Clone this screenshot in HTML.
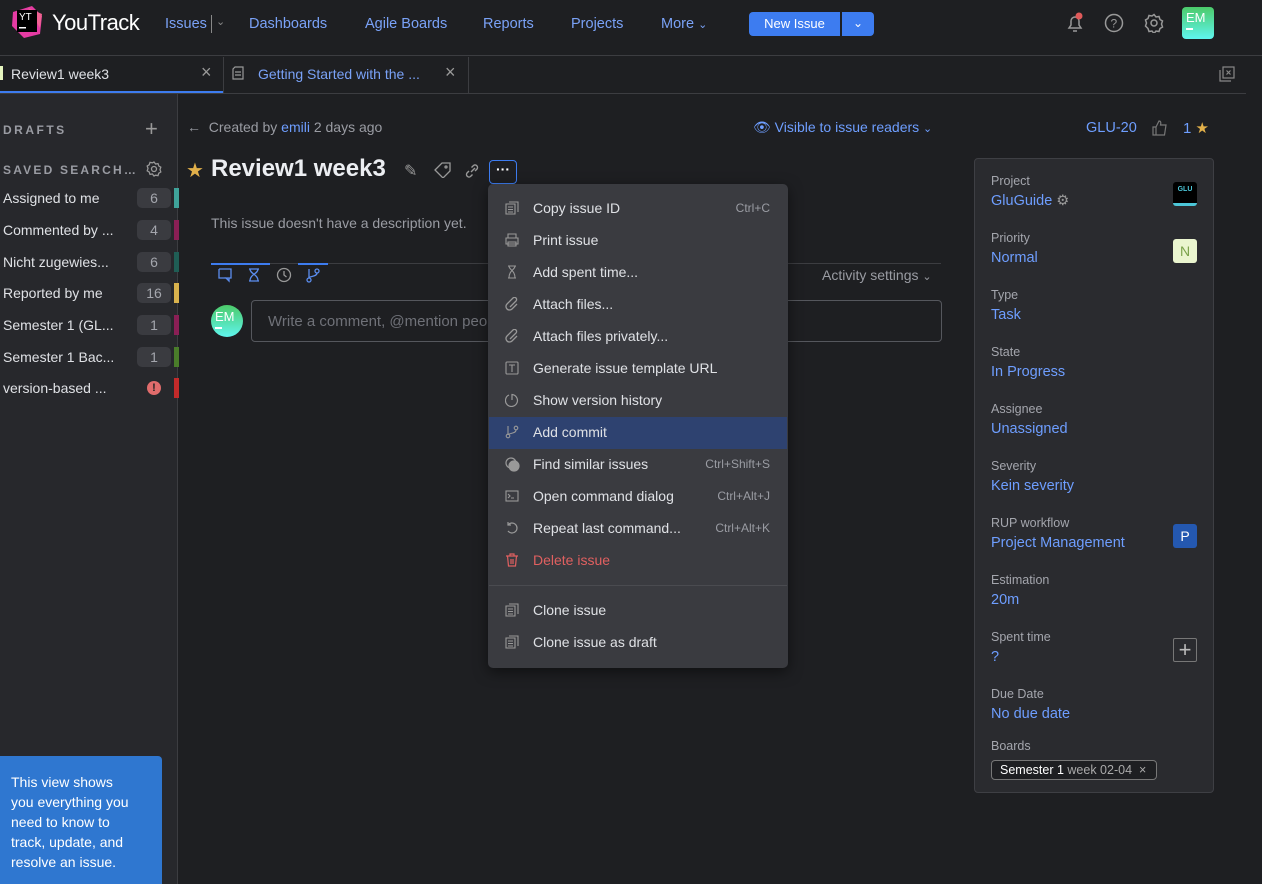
<!DOCTYPE html><html><head><meta charset="utf-8"><style>
*{margin:0;padding:0;box-sizing:border-box}
body{width:1262px;height:884px;background:#1e1f22;font-family:"Liberation Sans",sans-serif;color:#dfe1e5;position:relative;overflow:hidden;font-size:14px}
.a{position:absolute;white-space:nowrap}
.lnk{color:#6e9eff}
.mut{color:#9a9ca3}
.nav{top:16px;font-size:14.5px;color:#7aa2f7}
.si{left:3px;font-size:14px;color:#dfe1e5}
.cnt{left:137px;width:34px;height:20px;background:#3a3b40;border-radius:5px;color:#a4a6ad;text-align:center;line-height:20px;font-size:14px}
.bar{left:174px;width:5px;height:20px}
.mi{left:489px;width:298px;height:32px;line-height:32px;font-size:14px}
.mi .t{position:absolute;left:44px}
.mi .k{position:absolute;right:17px;font-size:12px;color:#9a9ca3}
.mi svg{position:absolute;left:16px;top:9px}
.fl{left:991px;font-size:12.5px;color:#a4a6ad}
.fv{left:991px;font-size:14.5px;color:#6e9eff}
</style></head><body>
<div class="a" style="left:0;top:0;width:1262px;height:56px;background:#1e1f22;border-bottom:1px solid #3c3d41"></div>
<svg class="a" style="left:10px;top:6px" width="34" height="32"><polygon points="3,6 22,0 32,10 30,28 14,32 2,20" fill="#e53ba3"/><polygon points="18,2 32,8 30,22" fill="#f06292"/><rect x="7" y="4" width="20" height="22" fill="#000"/><text x="9" y="14" fill="#fff" font-size="10" font-family="Liberation Sans">YT</text><rect x="9" y="21" width="7" height="1.5" fill="#fff"/></svg>
<div class="a" style="left:52px;top:10px;font-size:22px;color:#fff;letter-spacing:-0.5px">YouTrack</div>
<div class="a nav" style="left:165px">Issues</div>
<div class="a" style="left:211px;top:15px;width:1px;height:18px;background:#888"></div>
<div class="a nav" style="left:216px;top:15px;color:#888;font-size:11px">⌄</div>
<div class="a nav" style="left:249px">Dashboards</div>
<div class="a nav" style="left:365px">Agile Boards</div>
<div class="a nav" style="left:483px">Reports</div>
<div class="a nav" style="left:571px">Projects</div>
<div class="a nav" style="left:661px">More <span style="font-size:11px">⌄</span></div>
<div class="a" style="left:749px;top:12px;width:91px;height:24px;background:#3d7cf0;border-radius:4px 0 0 4px;color:#fff;font-size:13px;line-height:24px;text-align:center">New Issue</div>
<div class="a" style="left:842px;top:12px;width:32px;height:24px;background:#3d7cf0;border-radius:0 4px 4px 0;color:#fff;font-size:12px;line-height:22px;text-align:center">⌄</div>
<svg class="a" style="left:1064px;top:12px" width="22" height="22" fill="none" stroke="#999" stroke-width="1.5"><path d="M5 16h12l-2-3V9a4 4 0 0 0-8 0v4z M9 19h4"/><circle cx="15" cy="4" r="3.5" fill="#e05a5a" stroke="none"/></svg>
<svg class="a" style="left:1104px;top:13px" width="20" height="20" fill="none" stroke="#999" stroke-width="1.5"><circle cx="10" cy="10" r="8.5"/><text x="6.5" y="14.5" fill="#999" stroke="none" font-size="12" font-family="Liberation Sans">?</text></svg>
<svg class="a" style="left:1144px;top:13px" width="20" height="20" fill="none" stroke="#999" stroke-width="1.5"><circle cx="10" cy="10" r="3"/><path d="M10 1.5l2 2.5 3-.5 1 3 2.5 1.5-1 3 1 3-2.5 1.5-1 3-3-.5-2 2.5-2-2.5-3 .5-1-3L1.5 13l1-3-1-3L4 5.5l1-3 3 .5z"/></svg>
<div class="a" style="left:1182px;top:7px;width:32px;height:32px;border-radius:4px;background:linear-gradient(#4cca6a,#5ff5ee);color:#fff;font-size:13px;padding:3px 0 0 4px">EM<div style="width:7px;height:1.5px;background:#fff;margin-top:3px"></div></div>
<div class="a" style="left:0;top:93px;width:1246px;height:1px;background:#3c3d41"></div>
<div class="a" style="left:0;top:66px;width:3px;height:14px;background:#e6f5c0"></div>
<div class="a" style="left:11px;top:66px;font-size:14px;color:#dfe1e5">Review1 week3</div>
<div class="a" style="left:201px;top:62px;font-size:18px;color:#999">×</div>
<div class="a" style="left:0;top:91px;width:223px;height:2px;background:#3d7cf0"></div>
<div class="a" style="left:223px;top:57px;width:1px;height:36px;background:#3c3d41"></div>
<svg class="a" style="left:232px;top:66px" width="12" height="14" fill="none" stroke="#999" stroke-width="1.2"><path d="M3 1h8v12H1V3z M3 6h6M3 9h6"/></svg>
<div class="a" style="left:258px;top:66px;font-size:14px;color:#7aa2f7">Getting Started with the ...</div>
<div class="a" style="left:445px;top:62px;font-size:18px;color:#999">×</div>
<div class="a" style="left:468px;top:57px;width:1px;height:36px;background:#3c3d41"></div>
<svg class="a" style="left:1219px;top:66px" width="16" height="16" fill="none" stroke="#888" stroke-width="1.2"><rect x="4" y="1" width="11" height="11"/><path d="M1 4v11h11"/><path d="M7.5 4.5l4 4M11.5 4.5l-4 4"/></svg>
<div class="a" style="left:0;top:94px;width:178px;height:790px;background:#27282c;border-right:1px solid #3c3d41"></div>
<div class="a" style="left:3px;top:123px;font-size:12px;font-weight:bold;letter-spacing:2.5px;color:#9a9ca3">DRAFTS</div>
<div class="a" style="left:145px;top:116px;font-size:22px;color:#999;font-weight:200">+</div>
<div class="a" style="left:3px;top:163px;font-size:12px;font-weight:bold;letter-spacing:2.2px;color:#9a9ca3">SAVED SEARCH…</div>
<svg class="a" style="left:146px;top:161px" width="16" height="16" fill="none" stroke="#999" stroke-width="1.3"><circle cx="8" cy="8" r="2.5"/><path d="M8 1l1.6 2 2.4-.4.8 2.4 2 1.2-.8 2.4.8 2.4-2 1.2-.8 2.4-2.4-.4L8 15l-1.6-2-2.4.4-.8-2.4-2-1.2.8-2.4-.8-2.4 2-1.2.8-2.4 2.4.4z"/></svg>
<div class="a si" style="top:190px">Assigned to me</div><div class="a cnt" style="top:188px">6</div><div class="a bar" style="top:188px;background:#3fa39a"></div>
<div class="a si" style="top:222px">Commented by ...</div><div class="a cnt" style="top:220px">4</div><div class="a bar" style="top:220px;background:#8a1f55"></div>
<div class="a si" style="top:254px">Nicht zugewies...</div><div class="a cnt" style="top:252px">6</div><div class="a bar" style="top:252px;background:#1f5e55"></div>
<div class="a si" style="top:285px">Reported by me</div><div class="a cnt" style="top:283px">16</div><div class="a bar" style="top:283px;background:#d8b24d"></div>
<div class="a si" style="top:317px">Semester 1 (GL...</div><div class="a cnt" style="top:315px">1</div><div class="a bar" style="top:315px;background:#8a1f55"></div>
<div class="a si" style="top:349px">Semester 1 Bac...</div><div class="a cnt" style="top:347px">1</div><div class="a bar" style="top:347px;background:#4a7d2a"></div>
<div class="a si" style="top:380px">version-based ...</div>
<div class="a" style="left:147px;top:381px;width:14px;height:14px;border-radius:50%;background:#e06c6c;color:#222;font-size:11px;font-weight:bold;text-align:center;line-height:14px">!</div><div class="a bar" style="top:378px;background:#c22a2a"></div>
<div class="a" style="left:0;top:756px;width:162px;height:128px;background:#2f77d0;border-radius:0 4px 0 0;color:#fff;font-size:14px;line-height:20px;padding:16px 24px 0 11px;white-space:normal">This view shows you everything you need to know to track, update, and resolve an issue.</div>
<div class="a mut" style="left:187px;top:119px;font-size:14px">←&nbsp; Created by <span class="lnk">emili</span> 2 days ago</div>
<div class="a lnk" style="left:753px;top:119px;font-size:14px">👁 Visible to issue readers <span style="font-size:11px">⌄</span></div>
<div class="a lnk" style="left:1086px;top:120px;font-size:14.5px">GLU-20</div>
<svg class="a" style="left:1152px;top:120px" width="16" height="16" fill="none" stroke="#777" stroke-width="1.2"><path d="M1 7h3v8H1z M4 7l3-6c2 0 2 2 1.5 4H14l-1.5 10H4"/></svg>
<div class="a lnk" style="left:1183px;top:119px;font-size:15px">1 <span style="color:#e2b04a">★</span></div>
<div class="a" style="left:186px;top:158px;font-size:20px;color:#e2b04a">★</div>
<div class="a" style="left:211px;top:155px;font-size:24px;font-weight:bold;color:#eceef2">Review1 week3</div>
<div class="a" style="left:404px;top:161px;font-size:16px;color:#999">✎</div>
<svg class="a" style="left:434px;top:162px" width="18" height="16" fill="none" stroke="#999" stroke-width="1.3"><path d="M1 8l7-7h8v8l-7 7z"/><circle cx="12" cy="5" r="1"/></svg>
<svg class="a" style="left:464px;top:163px" width="16" height="16" fill="none" stroke="#999" stroke-width="1.4"><path d="M7 9l4-4 M5 8L3 10a2.5 2.5 0 0 0 3.5 3.5L8.5 11.5 M11 8l2-2a2.5 2.5 0 0 0-3.5-3.5L7.5 4.5"/></svg>
<div class="a" style="left:489px;top:160px;width:28px;height:24px;border:1.5px solid #3d7cf0;border-radius:4px;color:#fff;text-align:center;line-height:16px;font-size:14px;font-weight:bold">···</div>
<div class="a mut" style="left:211px;top:215px;font-size:14px">This issue doesn't have a description yet.</div>
<div class="a" style="left:211px;top:263px;width:730px;height:1px;background:#3c3d41"></div>
<div class="a" style="left:211px;top:263px;width:59px;height:2px;background:#3d7cf0"></div>
<div class="a" style="left:298px;top:263px;width:30px;height:2px;background:#3d7cf0"></div>
<svg class="a" style="left:217px;top:267px" width="110" height="16" fill="none" stroke-width="1.3"><path d="M2 2h12v9H9l3 3v-3" stroke="#5b8def"/><path d="M2 2v9h7" stroke="#5b8def"/><path d="M32 2h10M32 14h10M33 2c0 5 8 5 8 12M41 2c0 5-8 5-8 12" stroke="#5b8def"/><circle cx="67" cy="8" r="6.5" stroke="#999"/><path d="M67 4v4l2.5 2" stroke="#999"/><circle cx="92" cy="13" r="2" stroke="#5b8def"/><circle cx="100" cy="4" r="2" stroke="#5b8def"/><path d="M92 2v9M100 6c0 4-8 3-8 5" stroke="#5b8def"/></svg>
<div class="a mut" style="left:822px;top:267px;font-size:14px">Activity settings <span style="font-size:11px">⌄</span></div>
<div class="a" style="left:211px;top:305px;width:32px;height:32px;border-radius:50%;background:linear-gradient(#4cca6a,#5ff5ee);color:#fff;font-size:13px;padding:4px 0 0 4px">EM<div style="width:7px;height:1.5px;background:#fff;margin-top:3px"></div></div>
<div class="a" style="left:251px;top:300px;width:691px;height:42px;border:1px solid #55575d;border-radius:4px;color:#6f7178;font-size:15px;padding:12px 0 0 16px">Write a comment, @mention people</div>
<div class="a" style="left:974px;top:158px;width:240px;height:635px;background:#2a2b2f;border:1px solid #3e3f44;border-radius:4px"></div>
<div class="a fl" style="top:174px">Project</div><div class="a fv" style="top:193px">GluGuide <span style="color:#999">⚙</span></div>
<div class="a" style="left:1173px;top:182px;width:24px;height:24px;background:#000;border-radius:3px;border-bottom:3px solid #4cc6d8;color:#4cc6d8;font-size:7px;font-weight:bold;text-align:center;line-height:16px">GLU</div>
<div class="a fl" style="top:231px">Priority</div><div class="a fv" style="top:250px">Normal</div>
<div class="a" style="left:1173px;top:239px;width:24px;height:24px;background:#eaf5cf;border-radius:3px;color:#7aa24a;font-size:14px;text-align:center;line-height:24px">N</div>
<div class="a fl" style="top:288px">Type</div><div class="a fv" style="top:307px">Task</div>
<div class="a fl" style="top:345px">State</div><div class="a fv" style="top:364px">In Progress</div>
<div class="a fl" style="top:402px">Assignee</div><div class="a fv" style="top:421px">Unassigned</div>
<div class="a fl" style="top:459px">Severity</div><div class="a fv" style="top:478px">Kein severity</div>
<div class="a fl" style="top:516px">RUP workflow</div><div class="a fv" style="top:535px">Project Management</div>
<div class="a" style="left:1173px;top:524px;width:24px;height:24px;background:#2458b0;border-radius:3px;color:#fff;font-size:14px;text-align:center;line-height:24px">P</div>
<div class="a fl" style="top:573px">Estimation</div><div class="a fv" style="top:592px">20m</div>
<div class="a fl" style="top:630px">Spent time</div><div class="a fv" style="top:649px">?</div>
<div class="a" style="left:1173px;top:638px;width:24px;height:24px;border:1px solid #777;border-radius:2px;color:#bbb;font-size:22px;text-align:center;line-height:22px;font-weight:200">+</div>
<div class="a fl" style="top:687px">Due Date</div><div class="a fv" style="top:706px">No due date</div>
<div class="a fl" style="top:739px">Boards</div>
<div class="a" style="left:991px;top:760px;width:166px;height:20px;border:1px solid #777;border-radius:4px;font-size:12.5px;line-height:18px;padding-left:8px;background:#1e1f22"><span style="color:#fff">Semester 1</span> <span style="color:#aaa">week 02-04 &nbsp;×</span></div>
<div class="a" style="left:488px;top:184px;width:300px;height:484px;background:#3a3b40;border-radius:5px;box-shadow:0 4px 14px rgba(0,0,0,.5)"></div>
<div class="a" style="left:489px;top:417px;width:298px;height:32px;background:#2e4270"></div>
<div class="a" style="left:489px;top:585px;width:298px;height:1px;background:#4a4b50"></div>
<div class="a mi" style="top:192px"><svg width="14" height="14" fill="none" stroke="#999" stroke-width="1.1"><path d="M4 1h9v10 M1 3h9v10H1z M3 6h5M3 8.5h5M3 11h5"/></svg><span class="t">Copy issue ID</span><span class="k">Ctrl+C</span></div>
<div class="a mi" style="top:224px"><svg width="14" height="14" fill="none" stroke="#999" stroke-width="1.1"><path d="M3 5V1h8v4M1 5h12v6H1z M3 9h8v4H3z"/></svg><span class="t">Print issue</span></div>
<div class="a mi" style="top:256px"><svg width="14" height="14" fill="none" stroke="#999" stroke-width="1.1"><path d="M3 1h8M3 13h8M4 1c0 4 6 4 6 12M10 1c0 4-6 4-6 12"/></svg><span class="t">Add spent time...</span></div>
<div class="a mi" style="top:288px"><svg width="14" height="14" fill="none" stroke="#999" stroke-width="1.3"><path d="M12 7L7 12a3 3 0 0 1-5-5l6-6a2 2 0 0 1 3 3L5 10"/></svg><span class="t">Attach files...</span></div>
<div class="a mi" style="top:320px"><svg width="14" height="14" fill="none" stroke="#999" stroke-width="1.3"><path d="M12 7L7 12a3 3 0 0 1-5-5l6-6a2 2 0 0 1 3 3L5 10"/></svg><span class="t">Attach files privately...</span></div>
<div class="a mi" style="top:352px"><svg width="14" height="14" fill="none" stroke="#999" stroke-width="1.1"><rect x="1" y="1" width="12" height="12" rx="1"/><path d="M4 4h6M7 4v7"/></svg><span class="t">Generate issue template URL</span></div>
<div class="a mi" style="top:384px"><svg width="14" height="14" fill="none" stroke="#999" stroke-width="1.2"><path d="M4 2a6 6 0 1 0 3-0.5V7"/></svg><span class="t">Show version history</span></div>
<div class="a mi" style="top:416px"><svg width="14" height="14" fill="none" stroke="#999" stroke-width="1.1"><circle cx="3" cy="11" r="1.8"/><circle cx="11" cy="3" r="1.8"/><path d="M3 1v8M11 5c0 4-8 3-8 5"/></svg><span class="t">Add commit</span></div>
<div class="a mi" style="top:448px"><svg width="16" height="16" fill="none" stroke="#999" stroke-width="1.2"><circle cx="6" cy="6" r="5"/><circle cx="9" cy="9" r="5" fill="#999"/></svg><span class="t">Find similar issues</span><span class="k">Ctrl+Shift+S</span></div>
<div class="a mi" style="top:480px"><svg width="14" height="14" fill="none" stroke="#999" stroke-width="1.1"><rect x="1" y="2" width="12" height="10"/><path d="M3 5l2 2-2 2M6 9h3"/></svg><span class="t">Open command dialog</span><span class="k">Ctrl+Alt+J</span></div>
<div class="a mi" style="top:512px"><svg width="14" height="14" fill="none" stroke="#999" stroke-width="1.2"><path d="M3 4a5 5 0 1 1 0 6 M3 1v3h3"/></svg><span class="t">Repeat last command...</span><span class="k">Ctrl+Alt+K</span></div>
<div class="a mi" style="top:544px;color:#e06060"><svg width="14" height="14" fill="none" stroke="#e06060" stroke-width="1.2"><path d="M1 3h12M5 3V1h4v2M2.5 3l1 10h7l1-10M6 6v5M8 6v5"/></svg><span class="t">Delete issue</span></div>
<div class="a mi" style="top:594px"><svg width="14" height="14" fill="none" stroke="#999" stroke-width="1.1"><path d="M4 1h9v10 M1 3h9v10H1z M3 6h5M3 8.5h5M3 11h5"/></svg><span class="t">Clone issue</span></div>
<div class="a mi" style="top:626px"><svg width="14" height="14" fill="none" stroke="#999" stroke-width="1.1"><path d="M4 1h9v10 M1 3h9v10H1z M3 6h5M3 8.5h5M3 11h5"/></svg><span class="t">Clone issue as draft</span></div>
</body></html>
